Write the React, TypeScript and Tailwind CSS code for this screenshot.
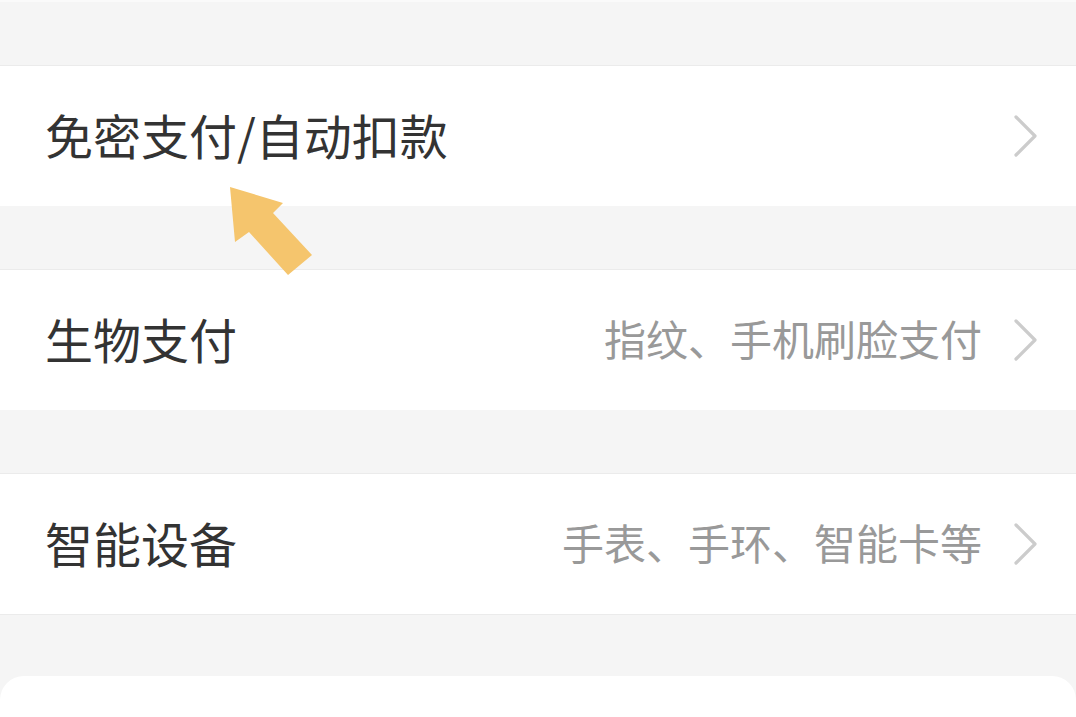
import * as React from "react"

const font = { fontFamily: '"Noto Sans CJK SC", "Noto Sans", sans-serif' }

function Chevron() {
  return (
    <svg width="26" height="44" viewBox="0 0 26 44" className="shrink-0">
      <path d="M3 3 L22 22 L3 41" fill="none" stroke="#cccccc" strokeWidth="3.2" strokeLinecap="round" strokeLinejoin="round" />
    </svg>
  )
}

function Row({ title, hint }: { title: string; hint?: string }) {
  return (
    <div className="flex h-[140px] items-center bg-white pl-[45px] pr-[37px]">
      <span className="flex-1 pb-[5px] text-[48px] leading-none text-[#333333]">{title}</span>
      {hint && <span className="mr-[31px] pb-[5px] text-[42px] leading-none text-[#999999]">{hint}</span>}
      <Chevron />
    </div>
  )
}

function Band({ h = "h-[64px]" }: { h?: string }) {
  return <div className={`${h} border-b border-[#ebebeb] bg-[#f5f5f5]`} />
}

export default function App() {
  return (
    <div className="relative h-[717px] w-[1076px] overflow-hidden bg-[#f5f5f5]" style={font}>
      <div className="h-[2px] bg-[#fafafa]" />
      <Band />
      <Row title="免密支付/自动扣款" />
      <Band />
      <Row title="生物支付" hint="指纹、手机刷脸支付" />
      <Band />
      <Row title="智能设备" hint="手表、手环、智能卡等" />
      <div className="h-[62px] border-t border-[#ebebeb] bg-[#f5f5f5]" />
      <div className="h-[60px] rounded-t-[24px] bg-white" />

      <svg className="absolute left-0 top-0" width="1076" height="717" viewBox="0 0 1076 717">
        <polygon
          points="230,187 283,203 273,213 312,255 288,275 249,232 235,242"
          fill="#f5c56d"
        />
      </svg>
    </div>
  )
}
